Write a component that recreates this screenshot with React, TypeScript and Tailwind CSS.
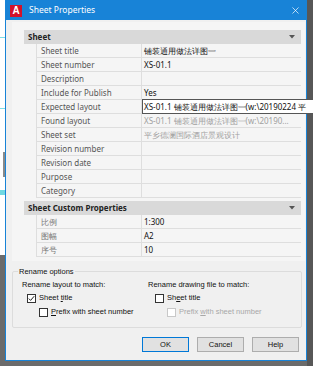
import React from "react";
import { X } from "lucide-react";

const sheetRows: { label: string; value?: string; muted?: boolean; editing?: boolean }[] = [
  { label: "Sheet title", value: "铺装通用做法详图一" },
  { label: "Sheet number", value: "XS-01.1" },
  { label: "Description" },
  { label: "Include for Publish", value: "Yes" },
  { label: "Expected layout", editing: true },
  { label: "Found layout", value: "XS-01.1 铺装通用做法详图一(w:\\20190...", muted: true },
  { label: "Sheet set", value: "平乡德澜国际酒店景观设计", muted: true },
  { label: "Revision number" },
  { label: "Revision date" },
  { label: "Purpose" },
  { label: "Category" },
];

const customRows = [
  { label: "比例", value: "1:300" },
  { label: "图幅", value: "A2" },
  { label: "序号", value: "10" },
];

function Caret() {
  return (
    <svg width="6" height="4" viewBox="0 0 6 4" aria-hidden="true">
      <path d="M0 0h6L3 3.5z" fill="#555" />
    </svg>
  );
}

function SectionHeader({ title }: { title: string }) {
  return (
    <div className="h-[14px] bg-[#d9d9d9] flex items-center justify-between pl-[4px] pr-[6px] font-bold text-[8px] text-[#222]">
      <span>{title}</span>
      <Caret />
    </div>
  );
}

function Row({ label, children, labelClass = "text-[#555]" }: { label: string; children?: React.ReactNode; labelClass?: string }) {
  return (
    <div className="h-[14px] flex border-b border-[#dedede]">
      <div className={`w-[105px] shrink-0 pl-[4px] border-r border-[#dedede] flex items-center ${labelClass}`}>{label}</div>
      <div className="flex-1 min-w-0 pl-[2px] flex items-center relative">{children}</div>
    </div>
  );
}

function Checkbox({ checked, disabled }: { checked?: boolean; disabled?: boolean }) {
  return (
    <span
      className={`w-[9px] h-[9px] shrink-0 border bg-white flex items-center justify-center ${disabled ? "border-[#c8c8c8]" : "border-[#333]"}`}
    >
      {checked && (
        <svg width="7" height="7" viewBox="0 0 7 7" aria-hidden="true">
          <path d="M0.8 3.6l1.8 1.8L6.2 1.2" fill="none" stroke="#222" strokeWidth="1" />
        </svg>
      )}
    </span>
  );
}

function Btn({ children, primary }: { children: React.ReactNode; primary?: boolean }) {
  return (
    <div
      className={`w-[47px] h-[15px] flex items-center justify-center bg-[#e1e1e1] border ${primary ? "border-[#0078d7]" : "border-[#adadad]"}`}
    >
      {children}
    </div>
  );
}

export default function App() {
  return (
    <div className="w-[313px] h-[366px] overflow-hidden bg-[#6b6b6b] flex font-['Noto_Sans',sans-serif]">
      {/* desktop strip on the left */}
      <div className="w-[5px] flex flex-col">
        <div className="h-[37px] bg-white" />
        <div className="h-[1px] bg-[#7fdde6]" />
        <div className="h-[70px] bg-white" />
        <div className="h-[1px] bg-[#7fdde6]" />
        <div className="h-[43px] bg-white" />
        <div className="h-[25px] bg-white flex">
          <div className="w-[3px]" />
          <div className="w-[2px] bg-[#8a8a8a]" />
        </div>
        <div className="h-[13px] bg-white" />
        <div className="h-[5px] bg-[#6fd8e2]" />
        <div className="h-[60px] bg-white" />
        <div className="flex-1" />
      </div>

      {/* dialog window */}
      <div className="w-[302px] flex flex-col">
        <div className="h-[361px] border border-[#1883d7] bg-[#f0f0f0] flex flex-col">
          <div className="h-[19px] bg-[#1883d7] flex items-center pl-[4px] pr-[4px] text-white">
            <span className="w-[12px] h-[12px] bg-[#d3122a] flex items-center justify-center text-[10px] leading-none font-bold text-white font-['Liberation_Sans',sans-serif]">
              A
            </span>
            <span className="ml-[7px] text-[8.5px] flex-1">Sheet Properties</span>
            <X size={11} strokeWidth={1.5} className="mr-[1px]" />
          </div>

          {/* property grid */}
          <div className="mt-[2px] ml-[6px] mr-[1px] h-[239px] bg-[#f5f5f5] pt-[8px] pl-[12px] pr-[4px] text-[8px] text-[#111]">
            <SectionHeader title="Sheet" />
            <div className="ml-[12px] border-l border-[#dedede]">
              {sheetRows.map((r) => (
                <Row key={r.label} label={r.label}>
                  {r.editing ? (
                    <div className="absolute left-0 top-[-1px] h-[15px] w-[174px] bg-white border border-[#555] pl-[1px] flex items-center whitespace-nowrap">
                      XS-01.1 铺装通用做法详图一(w:\20190224 平
                    </div>
                  ) : (
                    <span className={`whitespace-nowrap ${r.muted ? "text-[#a0a0a0]" : ""}`}>{r.value}</span>
                  )}
                </Row>
              ))}
            </div>
            <div className="h-[3px]" />
            <SectionHeader title="Sheet Custom Properties" />
            <div className="ml-[12px] border-l border-[#dedede]">
              {customRows.map((r) => (
                <Row key={r.label} label={r.label} labelClass="text-[#777]">
                  <span>{r.value}</span>
                </Row>
              ))}
            </div>
          </div>

          {/* rename options */}
          <fieldset className="mt-[5px] ml-[6px] mr-[4px] h-[62px] border border-[#dcdcdc] rounded-[2px] font-['Liberation_Sans',sans-serif] text-[7.5px] text-[#111]">
            <legend className="ml-[5px] px-[1px] leading-[11px]">Rename options</legend>
            <div className="flex pl-[9px] pt-[2px]">
              <div className="w-[126px] flex flex-col">
                <div className="h-[12px] flex items-center">Rename layout to match:</div>
                <div className="h-[14px] flex items-center pl-[5px] gap-[3px]">
                  <Checkbox checked />
                  <span>
                    Sheet <span className="underline">t</span>itle
                  </span>
                </div>
                <div className="h-[14px] flex items-center pl-[17px] gap-[3px]">
                  <Checkbox />
                  <span>
                    <span className="underline">P</span>refix with sheet number
                  </span>
                </div>
              </div>
              <div className="flex-1 flex flex-col">
                <div className="h-[12px] flex items-center">Rename drawing file to match:</div>
                <div className="h-[14px] flex items-center pl-[7px] gap-[3px]">
                  <Checkbox />
                  <span>
                    Sh<span className="underline">e</span>et title
                  </span>
                </div>
                <div className="h-[14px] flex items-center pl-[19px] gap-[3px] text-[#a8a8a8]">
                  <Checkbox disabled />
                  <span>
                    Prefix <span className="underline">w</span>ith sheet number
                  </span>
                </div>
              </div>
            </div>
          </fieldset>

          <div className="mt-[9px] mr-[7px] flex justify-end gap-[8px] font-['Liberation_Sans',sans-serif] text-[7.5px] text-[#111]">
            <Btn primary>OK</Btn>
            <Btn>Cancel</Btn>
            <Btn>Help</Btn>
          </div>
        </div>
      </div>

      <div className="w-[6px] bg-[#575757]" />
    </div>
  );
}
